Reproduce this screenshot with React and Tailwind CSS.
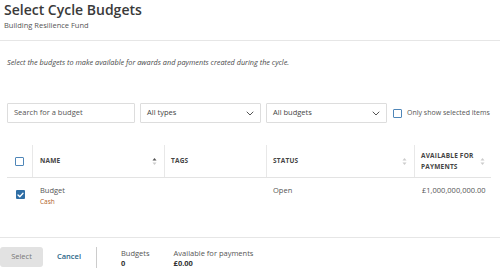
import React from "react";

function Chevron() {
  return (
    <svg width="8" height="5" viewBox="0 0 8 5" fill="none">
      <path d="M1 1l3 3 3-3" stroke="#555" strokeWidth="1" strokeLinecap="round" strokeLinejoin="round" />
    </svg>
  );
}

function Sort({ up }) {
  return (
    <svg width="5" height="9" viewBox="0 0 5 9">
      <path d="M2.5 1L4.5 3.5H0.5Z" fill={up ? "#555" : "#ccc"} />
      <path d="M2.5 8L4.5 5.5H0.5Z" fill="#ccc" />
    </svg>
  );
}

function Box({ checked }) {
  if (checked) {
    return (
      <div className="w-[9px] h-[9px] bg-[#2f6ea5] rounded-[1px] flex items-center justify-center">
        <svg width="7" height="6" viewBox="0 0 7 6" fill="none">
          <path d="M1 3l1.8 1.8L6 1.2" stroke="white" strokeWidth="1.3" strokeLinecap="round" strokeLinejoin="round" />
        </svg>
      </div>
    );
  }
  return <div className="w-[9px] h-[9px] border border-[#4f86b8] rounded-[1px] bg-white" />;
}

export default function App() {
  return (
    <div className="w-[500px] h-[275px] bg-white overflow-hidden flex flex-col font-['Open_Sans',sans-serif] text-[#4a4a4a]">
      <div className="h-[41px] border-b border-[#e6e6e6] px-[4px] shrink-0">
        <div className="text-[14px] leading-[20px] font-semibold text-[#3a3a3a]">Select Cycle Budgets</div>
        <div className="text-[7.5px] leading-[10px] text-[#555555]">Building Resilience Fund</div>
      </div>

      <div className="px-[7px] pt-[16px] text-[7.3px] leading-[10px] italic text-[#4a4a4a] whitespace-nowrap">
        Select the budgets to make available for awards and payments created during the cycle.
      </div>

      <div className="flex items-center px-[7px] mt-[36px] h-[20px] gap-[5px] text-[7.5px] text-[#555555]">
        <div className="w-[128px] h-[20px] border border-[#dddddd] rounded-[1px] flex items-center px-[6px]">
          Search for a budget
        </div>
        <div className="w-[121px] h-[20px] border border-[#dddddd] rounded-[1px] flex items-center justify-between px-[6px]">
          <span className="text-[#444444]">All types</span>
          <Chevron />
        </div>
        <div className="w-[121px] h-[20px] border border-[#dddddd] rounded-[1px] flex items-center justify-between px-[6px]">
          <span className="text-[#444444]">All budgets</span>
          <Chevron />
        </div>
        <div className="flex items-center gap-[5px] ml-[1px] whitespace-nowrap">
          <Box />
          <span className="text-[7px] text-[#555555]">Only show selected items</span>
        </div>
      </div>

      <div className="flex-1 px-[7px] mt-[22px]">
        <div className="w-[484px] flex h-[33px] border-b border-[#e3e3e3] text-[6.5px] font-bold text-[#444444] tracking-[0.2px]">
          <div className="w-[26px] flex items-center justify-center border-r border-[#e8e8e8]">
            <Box />
          </div>
          <div className="w-[132px] flex items-center justify-between pl-[7px] pr-[7px] border-r border-[#e8e8e8]">
            <span>NAME</span>
            <Sort up />
          </div>
          <div className="w-[102px] flex items-center pl-[6px] border-r border-[#e8e8e8]">
            <span>TAGS</span>
          </div>
          <div className="w-[148px] flex items-center justify-between pl-[6px] pr-[7px] border-r border-[#e8e8e8]">
            <span>STATUS</span>
            <Sort />
          </div>
          <div className="flex-1 flex items-center justify-between pl-[6px] pr-[6px]">
            <span className="leading-[11px]">AVAILABLE FOR<br />PAYMENTS</span>
            <Sort />
          </div>
        </div>
        <div className="w-[484px] flex h-[30px] text-[7.5px] text-[#555555]">
          <div className="w-[26px] flex items-start justify-center pt-[12px]">
            <Box checked />
          </div>
          <div className="w-[132px] pl-[7px] pt-[6px]">
            <div className="leading-[12px] text-[#555555]">Budget</div>
            <div className="text-[6.5px] leading-[11px] text-[#b0622a]">Cash</div>
          </div>
          <div className="w-[102px]" />
          <div className="w-[148px] pl-[6px] pt-[6px] leading-[12px] text-[#555555]">Open</div>
          <div className="flex-1 pl-[7px] pt-[6px] leading-[12px] text-[#555555]">£1,000,000,000.00</div>
        </div>
      </div>

      <div className="h-[38px] border-t border-[#e6e6e6] shrink-0 flex items-start pt-[9px]">
        <div className="w-[43px] h-[20px] bg-[#e2e2e2] rounded-[3px] flex items-center justify-center text-[7.5px] text-[#777777]">
          Select
        </div>
        <div className="ml-[14px] h-[20px] flex items-center text-[7.5px] font-semibold text-[#2b6689]">Cancel</div>
        <div className="ml-[15px] w-px h-[21px] bg-[#cccccc]" />
        <div className="ml-[24px] text-[7.5px] leading-[10px] mt-[1px]">
          <div className="text-[#555555]">Budgets</div>
          <div className="font-bold text-[#333333]">0</div>
        </div>
        <div className="ml-[24px] text-[7.5px] leading-[10px] mt-[1px]">
          <div className="text-[#555555]">Available for payments</div>
          <div className="font-bold text-[#333333]">£0.00</div>
        </div>
      </div>
    </div>
  );
}
